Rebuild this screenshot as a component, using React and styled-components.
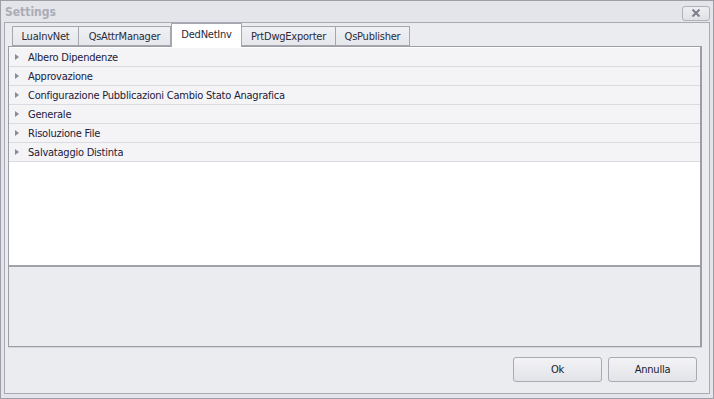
import React from 'react';
import styled, { createGlobalStyle } from 'styled-components';

const GlobalStyle = createGlobalStyle`
  html, body {
    margin: 0;
    padding: 0;
    background: #ebecf0;
  }
  * {
    box-sizing: border-box;
  }
`;

const Window = styled.div`
  width: 714px;
  height: 399px;
  border: 1px solid #9d9ea8;
  background: #e4e5ea;
  display: flex;
  flex-direction: column;
  font-family: 'DejaVu Sans Condensed', 'Liberation Sans', sans-serif;
  font-size: 11px;
  letter-spacing: -0.23px;
  color: #262636;
`;

const TitleBar = styled.div`
  height: 21px;
  display: flex;
  align-items: center;
  justify-content: space-between;
  padding: 0 3px 0 4px;

  .title {
    font-weight: bold;
    font-size: 12px;
    letter-spacing: 0;
    color: #abacb5;
  }
`;

const CloseButton = styled.button`
  width: 28px;
  height: 15px;
  margin-top: 3px;
  border: 1px solid #b0b1ba;
  border-radius: 3px;
  background: linear-gradient(#eeeff2, #e0e1e6);
  display: flex;
  align-items: center;
  justify-content: center;
  padding: 0;
`;

const Frame = styled.div`
  flex: 1;
  margin: 0 3px 4px 3px;
  border: 1px solid #a9aab3;
  background: #ebecf0;
  display: flex;
  flex-direction: column;
`;

const TabStrip = styled.div`
  height: 23px;
  display: flex;
  align-items: flex-end;
  padding-left: 6px;
  margin-left: 1px;
`;

const Tab = styled.div`
  width: ${(p) => p.$w}px;
  height: ${(p) => (p.$active ? 24 : 20)}px;
  margin-bottom: ${(p) => (p.$active ? -1 : 0)}px;
  border: 1px solid #a5a6b0;
  border-left-width: ${(p) => (p.$first || p.$active ? 1 : 0)}px;
  border-bottom: ${(p) => (p.$active ? 'none' : '1px solid #a5a6b0')};
  background: ${(p) => (p.$active ? '#ffffff' : 'linear-gradient(#f0f1f4, #e6e7eb)')};
  display: flex;
  align-items: center;
  justify-content: center;
  padding-bottom: ${(p) => (p.$active ? 2 : 0)}px;
  color: #2a2a38;
  position: relative;
  z-index: ${(p) => (p.$active ? 1 : 0)};
`;

const Panel = styled.div`
  height: 301px;
  margin: 0 7px 0 3px;
  border: 1px solid #9c9da7;
  border-right-width: 2px;
  box-shadow: 0 1px 0 #d6d7dd;
  display: flex;
  flex-direction: column;
`;

const Grid = styled.div`
  height: 220px;
  padding-top: 1px;
  background: #ffffff;
  border-bottom: 2px solid #a0a1ab;
`;

const Row = styled.div`
  height: 19px;
  display: flex;
  align-items: center;
  background: #f4f4f7;
  border-bottom: 1px solid #dbdce1;
  padding-left: 6px;
  color: #20203a;
`;

const Arrow = styled.span`
  width: 0;
  height: 0;
  border-top: 3.5px solid transparent;
  border-bottom: 3.5px solid transparent;
  border-left: 4px solid #8a8b95;
  margin-right: 9px;
`;

const Description = styled.div`
  flex: 1;
  background: #ebecf0;
`;

const Footer = styled.div`
  display: flex;
  justify-content: flex-end;
  gap: 6px;
  padding: 10px 12px 0 0;
`;

const Button = styled.button`
  width: 89px;
  height: 25px;
  border: 1px solid #a9aab3;
  border-radius: 3px;
  background: linear-gradient(#f3f3f6, #e2e3e8);
  font-family: inherit;
  font-size: 11px;
  letter-spacing: -0.23px;
  color: #20202c;
  padding: 0;
`;

const tabs = [
  { label: 'LuaInvNet', w: 67 },
  { label: 'QsAttrManager', w: 92 },
  { label: 'DedNetInv', w: 71, active: true },
  { label: 'PrtDwgExporter', w: 94 },
  { label: 'QsPublisher', w: 74 },
];

const rows = [
  'Albero Dipendenze',
  'Approvazione',
  'Configurazione Pubblicazioni Cambio Stato Anagrafica',
  'Generale',
  'Risoluzione File',
  'Salvataggio Distinta',
];

export default function App() {
  return (
    <>
      <GlobalStyle />
      <Window>
        <TitleBar>
          <span className="title">Settings</span>
          <CloseButton>
            <svg width="10" height="8" viewBox="0 0 10 8">
              <path d="M1.5 0.5 L8.5 7.5 M8.5 0.5 L1.5 7.5" stroke="#7d7e88" strokeWidth="2" />
            </svg>
          </CloseButton>
        </TitleBar>
        <Frame>
          <TabStrip>
            {tabs.map((t, i) => (
              <Tab key={t.label} $w={t.w} $active={t.active} $first={i === 0}>
                {t.label}
              </Tab>
            ))}
          </TabStrip>
          <Panel>
            <Grid>
              {rows.map((r) => (
                <Row key={r}>
                  <Arrow />
                  {r}
                </Row>
              ))}
            </Grid>
            <Description />
          </Panel>
          <Footer>
            <Button>Ok</Button>
            <Button>Annulla</Button>
          </Footer>
        </Frame>
      </Window>
    </>
  );
}
